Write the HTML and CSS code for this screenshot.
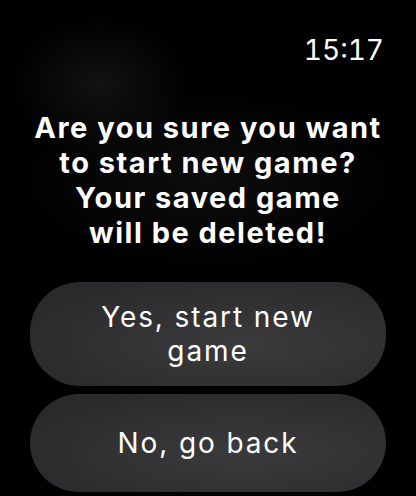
FILE: index.html
```html
<!DOCTYPE html>
<html lang="en">
<head>
    <meta charset="UTF-8">
    <meta name="viewport" content="width=device-width, initial-scale=1.0">
    <title>New Game</title>
    <link rel="stylesheet" href="styles.css">
</head>
<body>

    <div class="screen">
        <div class="status-bar">
            <span class="clock">15:17</span>
        </div>

        <h1 class="prompt">Are you sure you want<br>to start new game?<br>Your saved game<br>will be deleted!</h1>

        <div class="actions">
            <button class="action">Yes, start new<br>game</button>
            <button class="action">No, go back</button>
        </div>
    </div>

</body>
</html>
```

FILE: styles.css
```css
* {
    margin: 0;
    padding: 0;
    box-sizing: border-box;
}

body {
    font-family: 'Inter', 'Roboto', sans-serif;
    background: #000;
    color: #fff;
    width: 416px;
    height: 496px;
    overflow: hidden;
}

.screen {
    height: 100%;
    display: flex;
    flex-direction: column;
    background:
        radial-gradient(ellipse 90px 70px at 100px 85px, rgba(255, 255, 255, 0.07), transparent),
        radial-gradient(ellipse 200px 90px at 208px 180px, rgba(255, 255, 255, 0.05), transparent),
        #000;
}

.status-bar {
    display: flex;
    justify-content: flex-end;
    padding: 33px 32px 0 0;
    height: 110px;
}

.clock {
    font-size: 28px;
    font-weight: 400;
    font-variant-numeric: tabular-nums;
}

.prompt {
    font-size: 29px;
    font-weight: 700;
    line-height: 35px;
    text-align: center;
    letter-spacing: 1.5px;
    white-space: nowrap;
}

.actions {
    display: flex;
    flex-direction: column;
    gap: 8px;
    padding: 32px 30px 0;
}

.action {
    font-family: inherit;
    color: #fff;
    border: none;
    border-radius: 50px;
    background: radial-gradient(ellipse at 60% 60%, #3b3b3e, #2a2a2c 80%);
    font-size: 28px;
    font-weight: 400;
    line-height: 34px;
    letter-spacing: 1.9px;
}

.action:first-child {
    height: 104px;
}

.action:last-child {
    height: 98px;
}
```
